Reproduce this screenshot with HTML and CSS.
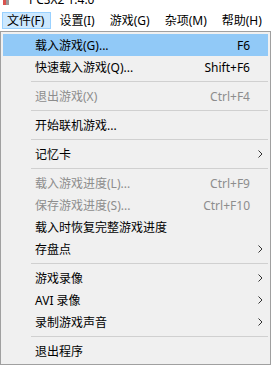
FILE: index.html
```html
<!DOCTYPE html>
<html lang="zh-CN">
<head>
    <meta charset="UTF-8">
    <meta name="viewport" content="width=device-width, initial-scale=1.0">
    <title>PCSX2</title>
    <link rel="stylesheet" href="styles.css">
</head>
<body>
    <div class="window">
        <!-- Title bar (cut off at the top) -->
        <div class="titlebar">
            <span class="app-icon"></span>
            <span class="title">PCSX2 1.4.0</span>
        </div>

        <!-- Menu bar -->
        <div class="menubar">
            <div class="menubar-item open">文件(F)</div>
            <div class="menubar-item">设置(I)</div>
            <div class="menubar-item">游戏(G)</div>
            <div class="menubar-item">杂项(M)</div>
            <div class="menubar-item">帮助(H)</div>
        </div>

        <!-- File menu -->
        <div class="dropdown">
            <div class="menu-item active"><span class="label">载入游戏(G)...</span><span class="shortcut">F6</span><span class="arrow"></span></div>
            <div class="menu-item"><span class="label">快速载入游戏(Q)...</span><span class="shortcut">Shift+F6</span><span class="arrow"></span></div>
            <div class="separator"></div>
            <div class="menu-item disabled"><span class="label">退出游戏(X)</span><span class="shortcut">Ctrl+F4</span><span class="arrow"></span></div>
            <div class="separator"></div>
            <div class="menu-item"><span class="label">开始联机游戏...</span><span class="shortcut"></span><span class="arrow"></span></div>
            <div class="separator"></div>
            <div class="menu-item"><span class="label">记忆卡</span><span class="shortcut"></span><span class="arrow"><svg width="5" height="8" viewBox="0 0 5 8"><path d="M0.5 0.5 L4 4 L0.5 7.5" fill="none" stroke="#333" stroke-width="1"/></svg></span></div>
            <div class="separator"></div>
            <div class="menu-item disabled"><span class="label">载入游戏进度(L)...</span><span class="shortcut">Ctrl+F9</span><span class="arrow"></span></div>
            <div class="menu-item disabled"><span class="label">保存游戏进度(S)...</span><span class="shortcut">Ctrl+F10</span><span class="arrow"></span></div>
            <div class="menu-item"><span class="label">载入时恢复完整游戏进度</span><span class="shortcut"></span><span class="arrow"></span></div>
            <div class="menu-item"><span class="label">存盘点</span><span class="shortcut"></span><span class="arrow"><svg width="5" height="8" viewBox="0 0 5 8"><path d="M0.5 0.5 L4 4 L0.5 7.5" fill="none" stroke="#333" stroke-width="1"/></svg></span></div>
            <div class="separator"></div>
            <div class="menu-item"><span class="label">游戏录像</span><span class="shortcut"></span><span class="arrow"><svg width="5" height="8" viewBox="0 0 5 8"><path d="M0.5 0.5 L4 4 L0.5 7.5" fill="none" stroke="#333" stroke-width="1"/></svg></span></div>
            <div class="menu-item"><span class="label">AVI 录像</span><span class="shortcut"></span><span class="arrow"><svg width="5" height="8" viewBox="0 0 5 8"><path d="M0.5 0.5 L4 4 L0.5 7.5" fill="none" stroke="#333" stroke-width="1"/></svg></span></div>
            <div class="menu-item"><span class="label">录制游戏声音</span><span class="shortcut"></span><span class="arrow"><svg width="5" height="8" viewBox="0 0 5 8"><path d="M0.5 0.5 L4 4 L0.5 7.5" fill="none" stroke="#333" stroke-width="1"/></svg></span></div>
            <div class="separator"></div>
            <div class="menu-item"><span class="label">退出程序</span><span class="shortcut"></span><span class="arrow"></span></div>
        </div>
    </div>
</body>
</html>
```

FILE: styles.css
```css
/* Basic Reset */
* {
    margin: 0;
    padding: 0;
    box-sizing: border-box;
}

body {
    font-family: "Noto Sans", "Noto Sans CJK SC", sans-serif;
    font-size: 12px;
    color: #000;
    background-color: #fff;
    width: 271px;
    height: 365px;
    overflow: hidden;
}

/* Title bar (only its lower edge is in view) */
.titlebar {
    height: 10px;
    overflow: hidden;
    display: flex;
    align-items: flex-end;
    gap: 20px;
    padding-left: 3px;
    background-color: #fff;
}

.app-icon {
    width: 6px;
    height: 10px;
    margin-bottom: 5px;
    background: linear-gradient(to right, #d9534f 0, #d9534f 3px, #999 3px);
    flex-shrink: 0;
}

.title {
    line-height: 15px;
    margin-bottom: 3px;
    color: #000;
}

/* Menu bar */
.menubar {
    height: 21px;
    display: flex;
    padding: 2px 0 2px 2px;
    background-color: #fff;
}

.menubar-item {
    height: 17px;
    line-height: 15px;
    padding: 0 6px 0 4px;
    margin-right: 3px;
    border: 1px solid transparent;
    white-space: nowrap;
}

.menubar-item.open {
    background-color: #cce8ff;
    border-color: #99d1ff;
}

/* Drop-down menu */
.dropdown {
    width: 271px;
    height: 334px;
    background-color: #f0f0f0;
    border: 1px solid #a0a0a0;
    padding: 2px;
}

.menu-item {
    height: 22px;
    display: flex;
    align-items: center;
    padding-left: 32px;
    white-space: nowrap;
}

.menu-item.active {
    background-color: #91c9f7;
}

.menu-item.disabled {
    color: #8d8d8d;
}

.menu-item .label {
    flex: 1;
}

.menu-item .arrow {
    width: 18px;
    display: flex;
    justify-content: center;
    padding-left: 3px;
}

.separator {
    height: 7px;
    padding-top: 3px;
    margin-left: 28px;
}

.separator::after {
    content: "";
    display: block;
    height: 1px;
    background-color: #d0d0d0;
}
```
